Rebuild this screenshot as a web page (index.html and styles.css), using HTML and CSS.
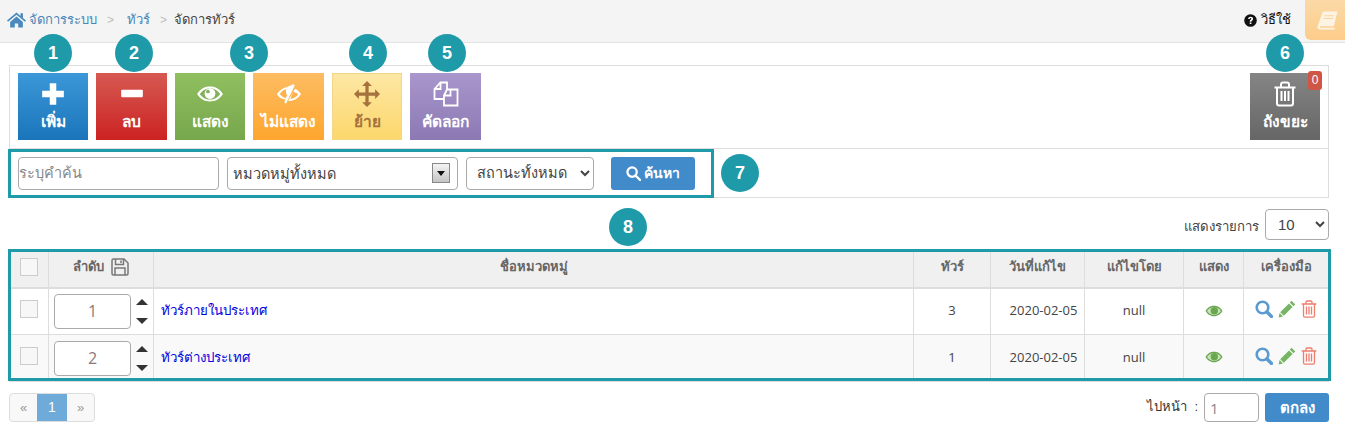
FILE: index.html
```html
<!DOCTYPE html>
<html lang="th">
<head>
<meta charset="utf-8">
<title>จัดการทัวร์</title>
<link rel="stylesheet" href="styles.css">
</head>
<body>
<header class="topbar">
  <nav class="crumbs">
    <svg class="ico-home" viewBox="0 0 20 17"><path d="M10 1 0 9.600l1.100 1.300L10 3.400l8.900 7.500L20 9.600l-3.200-2.700V2h-2.600v2.700zM3.300 11v6h4.900v-4.400h3.600V17h4.900v-6L10 5.300z"/></svg>
    <a class="crumb-link">จัดการระบบ</a><span class="sep sep-a">&gt;</span>
    <a class="crumb-link">ทัวร์</a><span class="sep sep-b">&gt;</span>
    <span class="crumb-now">จัดการทัวร์</span>
  </nav>
  <div class="help">
    <svg class="ico-help" viewBox="0 0 12 12"><circle cx="6" cy="6" r="5.800"/><path d="M3.800 4.600C3.900 3.300 5 2.500 6.100 2.500c1.300 0 2.300.8 2.300 1.900 0 1.600-1.600 1.500-1.600 2.700H5.300c0-1.900 1.500-1.800 1.500-2.700 0-.4-.3-.7-.8-.7-.4 0-.7.3-.8.8zM5.300 7.800h1.500v1.500H5.300z" fill="#fff"/></svg>
    <span>วิธีใช้</span>
  </div>
  <div class="book-tab">
    <svg viewBox="0 0 20 18" width="21" height="19"><path d="M5.500 .5H19.500L16 14.500H3.500C2.700 14.500 2.400 15.800 3.300 15.800H16.800L16.400 17.500H2.500C.8 17.500 .1 16.200 .5 14.800z" fill="#fdf3e2"/><path d="M7 4.500h9M6.300 7h9" stroke="#fcd39a" stroke-width="1"/></svg>
  </div>
</header>

<main class="page">
  <section class="toolbar">
    <button class="tile tile-blue"><svg class="tile-ico" viewBox="0 0 24 24"><path d="M9 2h6v7h7v6h-7v7H9v-7H2V9h7z" fill="#fff"/></svg><span>เพิ่ม</span></button>
    <button class="tile tile-wide tile-red"><svg class="tile-ico" viewBox="0 0 24 24"><rect x="2" y="8" width="20" height="7" rx="1" fill="#fff"/></svg><span>ลบ</span></button>
    <button class="tile tile-green"><svg class="tile-ico" viewBox="0 0 28 28"><path d="M0 14C4.500 7.500 9 6 14 6s9.500 1.500 14 8c-4.500 6.500-9 8-14 8S4.500 20.500 0 14z" fill="#fff"/><path d="M3 14c3.200-4.300 6.500-6 11-6s7.800 1.700 11 6c-3.200 4.300-6.500 6-11 6S6.200 18.300 3 14z" fill="#83b05a"/><circle cx="14" cy="13.500" r="5.800" fill="#fff"/><circle cx="11.800" cy="11.300" r="2" fill="#83b05a"/></svg><span>แสดง</span></button>
    <button class="tile tile-wide tile-orange"><svg class="tile-ico" viewBox="0 0 28 28"><path d="M1 14c3-4 6-6.800 11-7.600l6.500-3 1.800 1.100-9.500 20-1.800-1.100 1-3.400C6 19 3 18 1 14zM20.500 8.300c3 1.300 4.500 3.200 6.500 5.700-3.500 5-8 7.800-14 7.600z" fill="#fff"/><path d="M4 14c2-2.700 4-4.400 7-5-.8 2.700 0 5 1 6.400L10.500 18.500C8 17.700 6 16.500 4 14zM18.500 11.500c2 .7 3.500 1.200 5.500 2.500-2 3-5 5-8.500 5.300z" fill="#feb14d"/></svg><span>ไม่แสดง</span></button>
    <button class="tile tile-yellow"><svg class="tile-ico" viewBox="0 0 24 24"><path d="m12 0 4.500 4.500h-3v6h6v-3L24 12l-4.500 4.500v-3h-6v6h3L12 24l-4.500-4.500h3v-6h-6v3L0 12l4.500-4.500v3h6v-6h-3z" fill="#a5713c"/></svg><span>ย้าย</span></button>
    <button class="tile tile-wide tile-purple"><svg class="tile-ico" viewBox="0 0 26 26" fill="none" stroke="#fff" stroke-width="1.800"><path d="M11 18H1.500V8l6-6.500h6.500v7"/><path d="M1.500 8h6V1.500"/><path d="M14 8.500h10.500V24.500H11V14.500z"/><path d="M11 14.500h6.500V8.500"/></svg><span>คัดลอก</span></button>
    <button class="tile tile-gray tile-trash"><svg class="tile-ico" viewBox="0 0 24 26" fill="none" stroke="#fff" stroke-width="2"><path d="M1.500 6.500h21M8 6V3.500C8 2.500 9 1.500 10 1.500h4c1 0 2 1 2 2V6"/><path d="M4 6.500V22c0 1.500 1 2.500 2 2.500h12c1 0 2-1 2-2.500V6.500"/><path d="M8.500 10v10M12 10v10M15.500 10v10"/></svg><span>ถังขยะ</span><b class="trash-count">0</b></button>
  </section>

  <form class="searchbar">
    <input class="field field-keyword" placeholder="ระบุคำค้น">
    <div class="field field-cat"><span>หมวดหมู่ทั้งหมด</span><i class="cat-arrow"></i></div>
    <select class="field field-status"><option>สถานะทั้งหมด</option></select>
    <button type="button" class="btn-search"><svg viewBox="0 0 16 16" width="15" height="15" fill="none" stroke="#fff" stroke-width="2.400"><circle cx="6.500" cy="6.500" r="5"/><path d="m10 10 5 5" stroke-linecap="round"/></svg><span>ค้นหา</span></button>
  </form>

  <div class="pagesize">
    <span class="pagesize-label">แสดงรายการ</span>
    <select class="field size-select"><option>10</option></select>
  </div>

  <table class="grid">
    <colgroup><col class="c-check"><col class="c-order"><col><col class="c-tour"><col class="c-date"><col class="c-by"><col class="c-show"><col class="c-tools"></colgroup>
    <thead>
      <tr>
        <th><i class="check"></i></th>
        <th><span class="order-head">ลำดับ <svg viewBox="0 0 18 18" width="18" height="18" fill="none" stroke="#777" stroke-width="1.500"><path d="M1 2.500C1 1.500 1.500 1 2.500 1H13l4 4v10.500c0 1-.5 1.500-1.500 1.500h-13C1.500 17 1 16.500 1 15.500z"/><path d="M4.500 1v5.500h8V1M10 2.500v2.500M4 17v-7h10v7"/></svg></span></th>
        <th>ชื่อหมวดหมู่</th>
        <th>ทัวร์</th>
        <th>วันที่แก้ไข</th>
        <th>แก้ไขโดย</th>
        <th>แสดง</th>
        <th>เครื่องมือ</th>
      </tr>
    </thead>
    <tbody>
      <tr>
        <td class="check-cell"><i class="check"></i></td>
        <td class="order-cell"><input class="order-input" value="1"><span class="updown"><i class="tri-up"></i><i class="tri-down"></i></span></td>
        <td class="name"><a>ทัวร์ภายในประเทศ</a></td>
        <td class="num">3</td><td class="num date">2020-02-05</td><td class="num">null</td>
        <td class="eye-cell"><svg class="eye" viewBox="0 0 18 12"><path d="M.5 6C3 2 6 .8 9 .8S15 2 17.500 6C15 10 12 11.200 9 11.200S3 10 .5 6z" fill="#6aa84f"/><path d="M2 6c2-2.700 4.500-4 7-4s5 1.300 7 4c-2 2.700-4.500 4-7 4s-5-1.300-7-4z" fill="#cfe3c2"/><circle cx="9.300" cy="5.700" r="3.700" fill="#6aa84f"/></svg></td>
        <td><span class="tools"><svg class="t-ico" viewBox="0 0 18 18" fill="none" stroke="#5b9bd1" stroke-width="2.600"><circle cx="7.500" cy="7.500" r="5.800"/><path d="m12 12 4.500 4.500" stroke-width="3.400" stroke-linecap="round"/></svg><svg class="t-ico" viewBox="0 0 18 18"><path d="M13.600.8 17.200 4.400 15.400 6.200 11.800 2.600zM11 3.400 14.600 7 5.800 15.800 2.200 12.200zM1.600 13 5 16.400.6 17.400z" fill="#75b564"/></svg><svg class="t-ico t-trash" viewBox="0 0 16 18" fill="none" stroke="#ee7e6e" stroke-width="1.300"><path d="M.7 4h14.600M5 4V2.200C5 1.400 5.500 1 6 1h4c.5 0 1 .4 1 1.200V4"/><path d="M2.500 4v11.500c0 1 .6 1.700 1.400 1.700h8.200c.8 0 1.400-.7 1.400-1.700V4"/><path d="M5.500 6.500v8M8 6.500v8M10.500 6.500v8"/></svg></span></td>
      </tr>
      <tr class="alt">
        <td class="check-cell"><i class="check"></i></td>
        <td class="order-cell"><input class="order-input" value="2"><span class="updown"><i class="tri-up"></i><i class="tri-down"></i></span></td>
        <td class="name"><a>ทัวร์ต่างประเทศ</a></td>
        <td class="num">1</td><td class="num date">2020-02-05</td><td class="num">null</td>
        <td class="eye-cell"><svg class="eye" viewBox="0 0 18 12"><path d="M.5 6C3 2 6 .8 9 .8S15 2 17.500 6C15 10 12 11.200 9 11.200S3 10 .5 6z" fill="#6aa84f"/><path d="M2 6c2-2.700 4.500-4 7-4s5 1.300 7 4c-2 2.700-4.500 4-7 4s-5-1.300-7-4z" fill="#cfe3c2"/><circle cx="9.300" cy="5.700" r="3.700" fill="#6aa84f"/></svg></td>
        <td><span class="tools"><svg class="t-ico" viewBox="0 0 18 18" fill="none" stroke="#5b9bd1" stroke-width="2.600"><circle cx="7.500" cy="7.500" r="5.800"/><path d="m12 12 4.500 4.500" stroke-width="3.400" stroke-linecap="round"/></svg><svg class="t-ico" viewBox="0 0 18 18"><path d="M13.600.8 17.200 4.400 15.400 6.200 11.800 2.600zM11 3.400 14.600 7 5.800 15.800 2.200 12.200zM1.600 13 5 16.400.6 17.400z" fill="#75b564"/></svg><svg class="t-ico t-trash" viewBox="0 0 16 18" fill="none" stroke="#ee7e6e" stroke-width="1.300"><path d="M.7 4h14.600M5 4V2.200C5 1.400 5.500 1 6 1h4c.5 0 1 .4 1 1.200V4"/><path d="M2.500 4v11.500c0 1 .6 1.700 1.400 1.700h8.200c.8 0 1.400-.7 1.400-1.700V4"/><path d="M5.500 6.500v8M8 6.500v8M10.500 6.500v8"/></svg></span></td>
      </tr>
    </tbody>
  </table>

  <footer class="pager-row">
    <div class="pager"><a>«</a><a class="on">1</a><a>»</a></div>
    <div class="goto">
      <span>ไปหน้า &nbsp;:</span>
      <input class="goto-input" value="1">
      <button class="btn-go">ตกลง</button>
    </div>
  </footer>
</main>

<div class="frame frame-search"></div>
<div class="frame frame-table"></div>
<b class="pin pin-1">1</b>
<b class="pin pin-2">2</b>
<b class="pin pin-3">3</b>
<b class="pin pin-4">4</b>
<b class="pin pin-5">5</b>
<b class="pin pin-6">6</b>
<b class="pin pin-7">7</b>
<b class="pin pin-8">8</b>
</body>
</html>
```
FILE: styles.css
```css
* { box-sizing: border-box; }
html, body { margin: 0; padding: 0; }
body {
  position: relative;
  width: 1345px;
  height: 432px;
  overflow: hidden;
  background: #fff;
  color: #444;
  font: 13px/1.4 "Liberation Sans", "Noto Sans", "DejaVu Sans", sans-serif;
}
.topbar {
  display: flex;
  align-items: flex-start;
  height: 43px;
  padding-left: 7px;
  background: #f4f4f4;
  border-bottom: 1px solid #e4e4e4;
}
.crumbs { display: flex; align-items: center; height: 40px; }
.ico-home { width: 19px; height: 17px; fill: #4a89bd; margin: -2px 3px 0 0; }
.crumb-link { color: #4a86b8; }
.crumb-now { color: #444; }
.sep { color: #bdbdbd; font-size: 12px; }
.sep-a { margin: 0 13px 0 10px; }
.sep-b { margin: 0 7px 0 10px; }
.help {
  display: flex;
  align-items: center;
  gap: 4px;
  height: 40px;
  margin-left: auto;
  margin-right: 14px;
  color: #111;
}
.ico-help { width: 13px; height: 13px; fill: #111; }
.book-tab {
  display: flex;
  align-items: center;
  justify-content: center;
  width: 40px;
  height: 40px;
  padding-left: 4px;
  background: linear-gradient(#fbd9a6, #fccd8b);
  border-bottom-left-radius: 6px;
}
.page { padding: 22px 16px 0 9px; }

.toolbar {
  display: flex;
  gap: 8px;
  height: 84px;
  padding: 7px 8px 0;
  border: 1px solid #ddd;
}
.tile {
  position: relative;
  display: flex;
  flex-direction: column;
  align-items: center;
  width: 70px;
  height: 67px;
  padding: 8px 0 0;
  border: 0;
  color: #fff;
  font: bold 15.5px/20px "Liberation Sans", "Noto Sans", "DejaVu Sans", sans-serif;
  white-space: nowrap;
}
.tile-wide { width: 71px; }
.tile-ico { width: 26px; height: 26px; margin-bottom: 5px; flex: none; }
.tile-blue { background: linear-gradient(#3c97d8, #1b75bb); }
.tile-red { background: linear-gradient(#d65a52, #cc2222); }
.tile-green { background: linear-gradient(#8fbf5f, #77a74c); }
.tile-orange { background: linear-gradient(#fdbc62, #fea62e); }
.tile-yellow { background: linear-gradient(#fde7a4, #fcd76c); border: 1px solid #f1d68c; padding-top: 7px; color: #a5713c; }
.tile-purple { background: linear-gradient(#a896cc, #8c79b3); }
.tile-gray { background: linear-gradient(#858585, #666); }
.tile-trash { margin-left: auto; }
.trash-count {
  position: absolute;
  top: -2px;
  right: -2px;
  width: 14px;
  height: 19px;
  border-radius: 3px;
  background: #cf5644;
  font: 12px/19px "Liberation Sans", sans-serif;
  text-align: center;
}

.searchbar {
  display: flex;
  align-items: center;
  gap: 8px;
  height: 49px;
  padding: 0 8px;
  border: 1px solid #ddd;
  border-top: 0;
}
.field {
  height: 33px;
  padding: 0 5px;
  border: 1px solid #aaa;
  border-radius: 4px;
  background: #fff;
  color: #444;
  font: 14.5px "Liberation Sans", "Noto Sans", "DejaVu Sans", sans-serif;
}
.field::placeholder { color: #888; }
.field-keyword { width: 201px; padding-left: 0; font-size: 14.5px; }
.field-cat {
  display: flex;
  align-items: center;
  justify-content: space-between;
  width: 231px;
  padding-right: 7px;
}
.cat-arrow {
  position: relative;
  width: 18px;
  height: 20px;
  border: 1px solid #888;
  background: linear-gradient(#f4f4f4, #c4c4c4);
}
.cat-arrow::after {
  content: "";
  position: absolute;
  left: 4px;
  top: 7px;
  border: 4px solid transparent;
  border-top: 5px solid #111;
  border-bottom: 0;
}
.field-status { width: 128px; padding-left: 6px; }
.btn-search {
  display: flex;
  align-items: center;
  justify-content: center;
  gap: 3px;
  width: 84px;
  height: 33px;
  margin-left: 9px;
  border: 0;
  border-radius: 3px;
  background: #428bca;
  color: #fff;
  font: bold 14px "Liberation Sans", "Noto Sans", "DejaVu Sans", sans-serif;
}

.pagesize {
  display: flex;
  align-items: center;
  justify-content: flex-end;
  gap: 6px;
  height: 31px;
  margin: 11px 0 9px;
}
.pagesize-label { padding-top: 6px; font-size: 13.2px; }
.size-select { width: 64px; height: 31px; font-size: 15px; padding-left: 8px; }

.grid {
  width: 1320px;
  border-collapse: collapse;
  table-layout: fixed;
  text-align: center;
}
.c-check { width: 39px; }
.c-order { width: 105px; }
.c-tour { width: 77px; }
.c-date { width: 94px; }
.c-by { width: 99px; }
.c-show { width: 60px; }
.c-tools { width: 85px; }
.grid th, .grid td { border: 1px solid #ddd; padding: 0; }
.grid th {
  height: 38px;
  padding-bottom: 3px;
  border-bottom: 2px solid #ddd;
  background: #f0f0f0;
  color: #666;
  font-weight: bold;
}
.grid td { height: 47px; color: #444; }
.alt td { background: #f9f9f9; }
.check {
  display: block;
  width: 18px;
  height: 18px;
  margin: 0 auto 0 10px;
  border: 1px solid #ccc;
  background: #f7f7f7;
}
.check-cell .check { margin-top: -4px; }
.order-head { display: inline-flex; align-items: center; gap: 7px; }
.grid .order-cell { padding-left: 5px; padding-right: 5px; text-align: left; white-space: nowrap; }
.order-input {
  width: 77px;
  height: 35px;
  border: 1px solid #aaa;
  border-radius: 4px;
  background: #fff;
  color: #8a7a7a;
  font: 16px "Open Sans", "Liberation Sans", sans-serif;
  text-align: center;
  vertical-align: middle;
}
.updown {
  display: inline-flex;
  flex-direction: column;
  gap: 13px;
  margin-left: 5px;
  vertical-align: middle;
}
.tri-up, .tri-down { width: 0; height: 0; border: 6px solid transparent; }
.tri-up { border-top: 0; border-bottom: 6px solid #333; }
.tri-down { border-bottom: 0; border-top: 6px solid #333; }
.grid .name { padding-left: 7px; text-align: left; font-size: 13.3px; }
.name a { color: #0000e0; }
.grid .num { padding-bottom: 2px; font-family: "Open Sans", "Liberation Sans", sans-serif; }
.grid .date { padding-left: 12px; }
.grid .eye-cell { padding-bottom: 2px; }
.eye { width: 18px; height: 12px; vertical-align: middle; }
.tools { display: flex; justify-content: center; gap: 5px; margin-top: -4px; }
.t-ico { width: 18px; height: 18px; }
.t-trash { width: 16px; }

.pager-row {
  display: flex;
  justify-content: space-between;
  margin-top: 11px;
}
.pager {
  display: flex;
  height: 29px;
  border: 1px solid #ddd;
  border-radius: 4px;
  background: #f8f8f8;
  color: #999;
  line-height: 27px;
}
.pager a { width: 27px; text-align: center; }
.pager a.on { width: 30px; background: #6fabd8; color: #fff; font-size: 14px; }
.goto { display: flex; align-items: center; gap: 6px; color: #333; }
.goto-input {
  width: 55px;
  height: 29px;
  padding: 0 5px;
  border: 1px solid #aaa;
  border-radius: 4px;
  color: #888;
  font: 15px "Open Sans", "Liberation Sans", sans-serif;
}
.btn-go {
  width: 64px;
  height: 29px;
  border: 0;
  border-radius: 3px;
  background: #428bca;
  color: #fff;
  font: bold 15px "Liberation Sans", "Noto Sans", "DejaVu Sans", sans-serif;
}

.frame { position: absolute; border: 3px solid #1f9aa9; }
.frame-search { left: 8px; top: 149px; width: 706px; height: 49px; }
.frame-table { left: 8px; top: 249px; width: 1323px; height: 132px; }
.pin {
  position: absolute;
  width: 38px;
  height: 38px;
  border-radius: 50%;
  background: #1f9aa9;
  color: #fff;
  font: bold 18px/38px "Liberation Sans", sans-serif;
  text-align: center;
}
.pin-1 { left: 34px; top: 34px; }
.pin-2 { left: 115px; top: 34px; }
.pin-3 { left: 230px; top: 34px; }
.pin-4 { left: 349px; top: 34px; }
.pin-5 { left: 428px; top: 34px; }
.pin-6 { left: 1266px; top: 34px; }
.pin-7 { left: 721px; top: 154px; }
.pin-8 { left: 609px; top: 208px; }
```
